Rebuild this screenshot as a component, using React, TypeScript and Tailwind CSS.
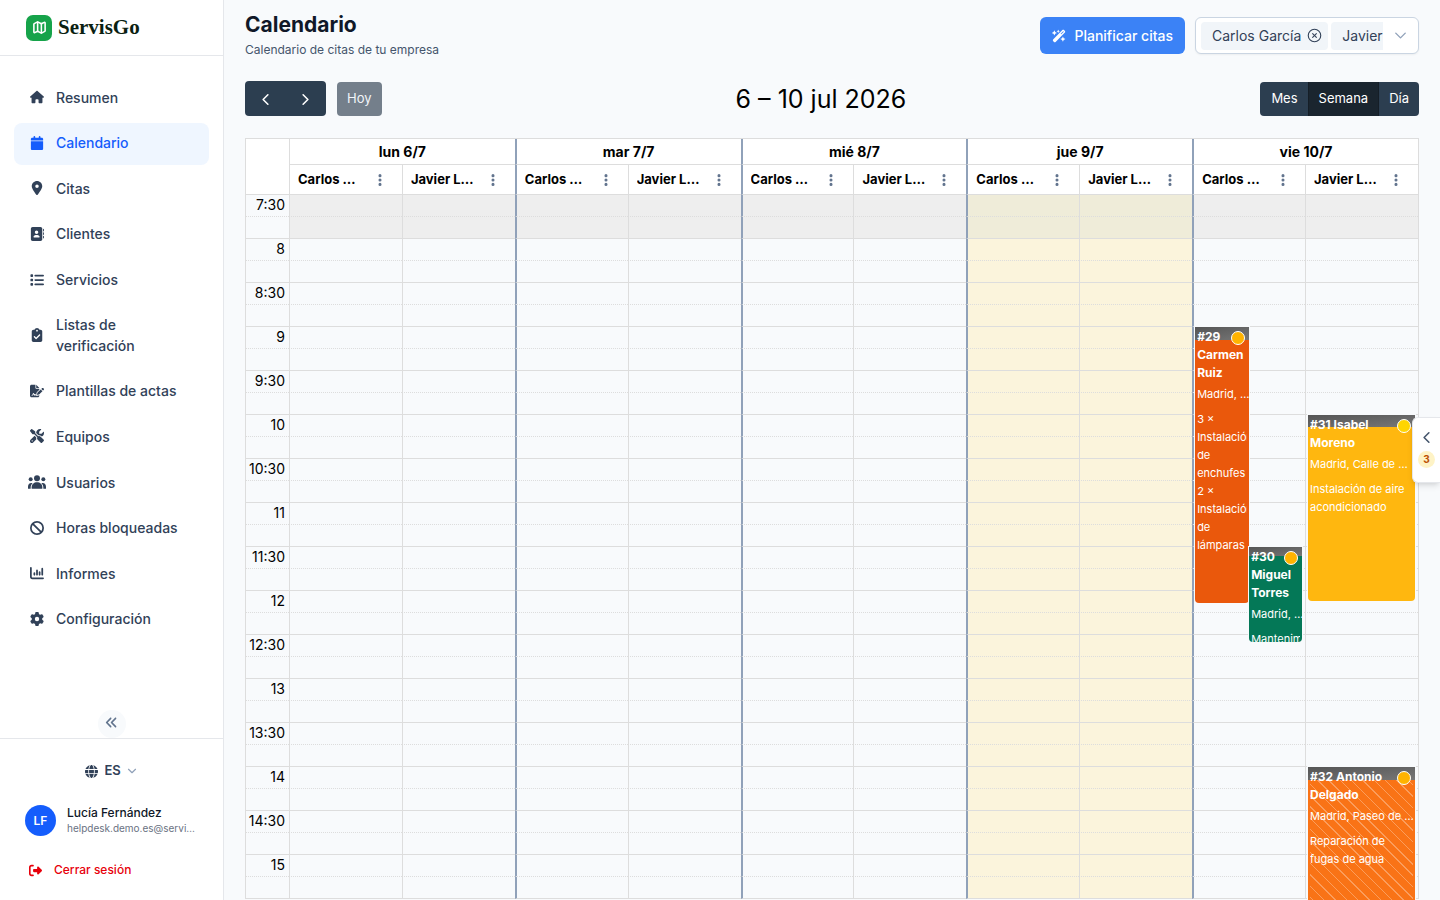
import type { ComponentType } from 'react';
import {
  FaAddressBook,
  FaAnglesLeft,
  FaBan,
  FaCalendar,
  FaChartColumn,
  FaClipboardCheck,
  FaEllipsisVertical,
  FaFileSignature,
  FaGear,
  FaGlobe,
  FaHouse,
  FaList,
  FaLocationDot,
  FaRightFromBracket,
  FaScrewdriverWrench,
  FaWandMagicSparkles,
} from 'react-icons/fa6';
import { ChevronDown, ChevronLeft, ChevronRight, CircleX, Map } from 'lucide-react';

function UsersIcon({ className }: { className?: string }) {
  return (
    <svg viewBox="0 0 54 42" fill="currentColor" className={className} aria-hidden="true">
      <circle cx="27" cy="10" r="9" />
      <circle cx="8" cy="13" r="6" />
      <circle cx="46" cy="13" r="6" />
      <path d="M11 41v-4c0-9 7-15 16-15s16 6 16 15v4z" />
      <path d="M0 41v-6c0-6 4-11 10-11 1 0 3 0 4 1-4 3-6 8-6 13v3z" />
      <path d="M54 41v-6c0-6-4-11-10-11-1 0-3 0-4 1 4 3 6 8 6 13v3z" />
    </svg>
  );
}

const navItems: { label: string; icon: ComponentType<{ className?: string }>; active?: boolean }[] = [
  { label: 'Resumen', icon: FaHouse },
  { label: 'Calendario', icon: FaCalendar, active: true },
  { label: 'Citas', icon: FaLocationDot },
  { label: 'Clientes', icon: FaAddressBook },
  { label: 'Servicios', icon: FaList },
  { label: 'Listas de verificación', icon: FaClipboardCheck },
  { label: 'Plantillas de actas', icon: FaFileSignature },
  { label: 'Equipos', icon: FaScrewdriverWrench },
  { label: 'Usuarios', icon: UsersIcon },
  { label: 'Horas bloqueadas', icon: FaBan },
  { label: 'Informes', icon: FaChartColumn },
  { label: 'Configuración', icon: FaGear },
];

const days = ['lun 6/7', 'mar 7/7', 'mié 8/7', 'jue 9/7', 'vie 10/7'];
const technicians = ['Carlos García', 'Javier López'];
const TODAY = 3;

// one row every 15 minutes, starting at 7:30
const SLOT_HEIGHT = 22;
const rows = Array.from({ length: 32 }, (_, i) => {
  const minutes = 450 + i * 15;
  const h = Math.floor(minutes / 60);
  const m = minutes % 60;
  return { index: i, label: m === 0 ? `${h}` : m === 30 ? `${h}:30` : '' };
});

type Appointment = {
  id: string;
  client: string;
  address: string;
  services: string[];
  day: number;
  tech: number;
  row: number;
  height: number;
  place: string;
  color: string;
  bar: string;
  dot: string;
  striped?: boolean;
};

const appointments: Appointment[] = [
  {
    id: '#29',
    client: 'Carmen Ruiz',
    address: 'Madrid, …',
    services: ['3 × Instalación de enchufes', '2 × Instalación de lámparas'],
    day: 4,
    tech: 0,
    row: 6,
    height: 276,
    place: 'left-px w-[54px]',
    color: 'bg-[#ea580c]',
    bar: 'h-[13px]',
    dot: 'bg-[#ffb300]',
  },
  {
    id: '#30',
    client: 'Miguel Torres',
    address: 'Madrid, …',
    services: ['Mantenimiento de caldera'],
    day: 4,
    tech: 0,
    row: 16,
    height: 95,
    place: 'left-[55px] w-[53px]',
    color: 'bg-[#047857]',
    bar: 'h-[9px]',
    dot: 'bg-[#ffb300]',
  },
  {
    id: '#31',
    client: 'Isabel Moreno',
    address: 'Madrid, Calle de …',
    services: ['Instalación de aire acondicionado'],
    day: 4,
    tech: 1,
    row: 10,
    height: 186,
    place: 'left-[2px] right-[3px]',
    color: 'bg-[#ffb70f]',
    bar: 'h-[12px]',
    dot: 'bg-[#ffd500]',
  },
  {
    id: '#32',
    client: 'Antonio Delgado',
    address: 'Madrid, Paseo de …',
    services: ['Reparación de fugas de agua'],
    day: 4,
    tech: 1,
    row: 26,
    height: 186,
    place: 'left-[2px] right-[3px]',
    color: 'bg-[#f97316]',
    bar: 'h-[13px]',
    dot: 'bg-[#ffb300]',
    striped: true,
  },
];

function Sidebar() {
  return (
    <aside className="flex w-56 shrink-0 flex-col border-r border-gray-200 bg-white">
      <a href="#inicio" className="flex h-14 shrink-0 items-center gap-1.5 border-b border-gray-200 pl-[26px]">
        <span className="flex size-[26px] items-center justify-center rounded-[7px] bg-[#16a34a] text-white">
          <Map size={15} strokeWidth={2.5} />
        </span>
        <span className="font-['Liberation_Serif',serif] text-[21px] font-bold text-[#0b1f12]">ServisGo</span>
      </a>
      <nav className="flex-1 px-3.5 pt-[21px]">
        <ul className="flex min-h-[564px] flex-col justify-between">
          {navItems.map(({ label, icon: Icon, active }) => (
            <li key={label}>
              <a
                href="#"
                className={`flex min-h-[42px] items-center gap-2.5 rounded-lg pt-[9px] pr-6 pb-[11px] pl-3.5 text-sm leading-[21px] font-medium ${
                  active ? 'bg-blue-50 text-[#155dfc]' : 'text-slate-700'
                }`}
              >
                <span className="flex w-[18px] shrink-0 justify-center">
                  <Icon className="h-3.5 w-auto" />
                </span>
                {label}
              </a>
            </li>
          ))}
        </ul>
      </nav>
      <div className="flex justify-center">
        <button
          type="button"
          aria-label="Contraer menú"
          className="flex size-7 items-center justify-center rounded-full bg-slate-50 pb-1 text-slate-500"
        >
          <FaAnglesLeft size={13} />
        </button>
      </div>
      <div className="flex flex-col border-t border-gray-200 px-[25px] pt-[18px] pb-5">
        <div className="flex h-7 items-center justify-center gap-[7px] text-slate-700">
          <FaGlobe size={13} />
          <div className="relative flex items-center">
            <select aria-label="Idioma" className="w-[34px] appearance-none text-[13px] font-semibold">
              <option>ES</option>
            </select>
            <ChevronDown size={14} className="pointer-events-none absolute right-0 text-slate-400" />
          </div>
        </div>
        <div className="mt-[20px] flex items-center gap-[11px]">
          <span className="flex size-[31px] shrink-0 items-center justify-center rounded-full bg-[#155dfc] text-xs font-semibold text-white">
            LF
          </span>
          <div className="min-w-0 flex-1">
            <p className="truncate text-xs leading-4 font-medium text-gray-900">Lucía Fernández</p>
            <p className="truncate text-[10px] leading-[15px] text-gray-500">helpdesk.demo.es@servisgo.example</p>
          </div>
        </div>
        <button type="button" className="mt-[24px] ml-1 flex items-center gap-3 text-xs leading-5 font-medium text-[#e7000b]">
          <FaRightFromBracket size={13} />
          Cerrar sesión
        </button>
      </div>
    </aside>
  );
}

function PageHeader() {
  return (
    <header className="flex items-start justify-between">
      <div>
        <h1 className="text-[21px] leading-[26px] font-bold text-gray-900">Calendario</h1>
        <p className="mt-[3px] text-xs leading-[18px] text-slate-600">Calendario de citas de tu empresa</p>
      </div>
      <div className="mt-[5px] flex gap-2.5">
        <button
          type="button"
          className="flex h-[37px] items-center gap-2 rounded-md bg-[#3b82f6] px-3 text-sm font-medium text-white"
        >
          <FaWandMagicSparkles className="h-3.5 w-auto" />
          Planificar citas
        </button>
        <div className="flex h-[37px] w-[224px] items-center rounded-md border border-slate-300 bg-white pl-[5px] shadow-xs">
          <div className="flex flex-1 gap-[3px] overflow-hidden text-sm text-slate-700">
            <span className="flex h-7 shrink-0 items-center gap-1.5 rounded-sm bg-slate-100 pr-1.5 pl-[11px]">
              Carlos García
              <button type="button" aria-label="Quitar Carlos García">
                <CircleX size={15} strokeWidth={1.75} />
              </button>
            </span>
            <span className="flex h-7 shrink-0 items-center rounded-sm bg-slate-100 px-[11px] whitespace-nowrap">
              Javier López
            </span>
          </div>
          <button type="button" aria-label="Elegir técnicos" className="flex w-[35px] justify-center text-slate-400">
            <ChevronDown size={19} strokeWidth={1.75} />
          </button>
        </div>
      </div>
    </header>
  );
}

function Toolbar() {
  return (
    <div className="mt-[22px] flex items-center justify-between">
      <div className="flex items-end gap-[11px]">
        <div className="flex h-[35px] rounded-sm bg-[#2c3e50] text-white">
          <button type="button" aria-label="Semana anterior" className="flex w-10 items-center justify-center pt-0.5">
            <ChevronLeft size={19} />
          </button>
          <button type="button" aria-label="Semana siguiente" className="flex w-[41px] items-center justify-center pt-0.5">
            <ChevronRight size={19} />
          </button>
        </div>
        <button type="button" disabled className="h-[34px] rounded-sm bg-[#747f8b] px-2.5 text-[13px] text-slate-100">
          Hoy
        </button>
      </div>
      <h2 className="text-[25px] leading-8 text-black">6 – 10 jul 2026</h2>
      <div className="flex h-[34px] text-[13px] text-white">
        <button type="button" className="rounded-l-sm bg-[#2c3e50] pr-2.5 pl-[11px]">
          Mes
        </button>
        <button type="button" aria-pressed="true" className="border-x border-[#151e27] bg-[#1a252f] px-2.5">
          Semana
        </button>
        <button type="button" className="rounded-r-sm bg-[#2c3e50] px-2.5">
          Día
        </button>
      </div>
    </div>
  );
}

function AppointmentCard({ item }: { item: Appointment }) {
  return (
    <article
      className={`absolute top-0 z-10 overflow-hidden rounded-b-sm leading-[18px] text-white shadow-[0_0_0_1px_#f8fafc] ${item.place} ${item.color}`}
      style={{ height: item.height }}
    >
      <div className={`bg-linear-to-br from-[#555555] to-[#777777] ${item.bar}`} />
      {item.striped && (
        <div className="absolute inset-x-[2px] top-[13px] bottom-0 bg-[repeating-linear-gradient(45deg,transparent_0_7px,rgba(255,255,255,0.3)_7px_8px)]" />
      )}
      <span className={`absolute top-1 right-1 size-3.5 rounded-full border border-white ${item.dot}`} />
      <div className="absolute top-px right-0 bottom-0 left-[2px] overflow-hidden text-[11px]">
        <p className="pr-[18px] text-xs leading-[18px] font-bold">
          {item.id} {item.client}
        </p>
        <p className="mt-[3px] whitespace-nowrap">{item.address}</p>
        <div className="mt-[7px] mr-[2px] overflow-hidden">
          {item.services.map((service) => (
            <p key={service}>{service}</p>
          ))}
        </div>
      </div>
    </article>
  );
}

function WeekTable() {
  return (
    <table className="mt-[22px] w-full table-fixed border-separate border-spacing-0 border-t border-r border-l border-[#dddddd] text-sm text-black">
      <colgroup>
        <col className="w-[43px]" />
        {days.flatMap((day) => technicians.map((tech) => <col key={day + tech} />))}
      </colgroup>
      <thead className="bg-white">
        <tr className="h-[26px]">
          <td rowSpan={2} className="border-b border-[#dddddd]" />
          {days.map((day, d) => (
            <th
              key={day}
              colSpan={2}
              scope="colgroup"
              className={`border-b border-b-[#dddddd] p-0 font-bold ${
                d === 0 ? 'border-l border-l-[#dddddd]' : 'border-l-2 border-l-slate-400'
              }`}
            >
              {day}
            </th>
          ))}
        </tr>
        <tr className="h-[30px]">
          {days.flatMap((day, d) =>
            technicians.map((tech, t) => (
              <th
                key={day + tech}
                scope="col"
                className={`border-b border-b-[#dddddd] p-0 text-[13px] font-bold ${
                  d > 0 && t === 0 ? 'border-l-2 border-l-slate-400' : 'border-l border-l-[#dddddd]'
                }`}
              >
                <div className="flex items-center gap-2 pr-3 pl-2">
                  <span className="flex-1 truncate text-left">{tech}</span>
                  <button type="button" aria-label={`Opciones de ${tech}`} className="flex w-5 shrink-0 justify-center text-slate-500">
                    <FaEllipsisVertical size={14} />
                  </button>
                </div>
              </th>
            )),
          )}
        </tr>
      </thead>
      <tbody>
        {rows.map((row) => {
          const line = row.index % 2 === 0 ? 'border-b border-b-[#dddddd] border-dotted' : 'border-b border-b-[#dddddd]';
          return (
            <tr key={row.index} style={{ height: SLOT_HEIGHT }}>
              <th scope="row" className={`p-0 pr-1 text-right align-top leading-5 font-normal ${line}`}>
                {row.label}
              </th>
              {days.flatMap((day, d) =>
                technicians.map((tech, t) => {
                  const closed = row.index < 2;
                  const fill =
                    d === TODAY ? (closed ? 'bg-[#efecd9]' : 'bg-[#fbf4dc]') : closed ? 'bg-[#eeeeee]' : '';
                  return (
                    <td
                      key={day + tech}
                      className={`relative p-0 ${line} ${fill} [border-left-style:solid] ${
                        d > 0 && t === 0 ? 'border-l-2 border-l-slate-400' : 'border-l border-l-[#dddddd]'
                      }`}
                    >
                      {appointments
                        .filter((a) => a.day === d && a.tech === t && a.row === row.index)
                        .map((a) => (
                          <AppointmentCard key={a.id} item={a} />
                        ))}
                    </td>
                  );
                }),
              )}
            </tr>
          );
        })}
      </tbody>
    </table>
  );
}

export default function App() {
  return (
    <div className="relative flex h-screen overflow-hidden bg-slate-50 font-['Inter',sans-serif]">
      <Sidebar />
      <main className="min-w-0 flex-1 overflow-hidden px-[21px] pt-3">
        <PageHeader />
        <Toolbar />
        <WeekTable />
      </main>
      <button
        type="button"
        aria-label="Citas pendientes: 3"
        className="absolute top-[417px] right-0 z-20 flex h-[66px] w-7 flex-col items-center justify-center gap-1 rounded-l-md border border-r-0 border-gray-200 bg-white pb-1 shadow-md"
      >
        <ChevronLeft size={19} className="text-slate-600" />
        <span className="flex size-[17px] items-center justify-center rounded-full bg-amber-100 text-[10px] font-bold text-amber-700">
          3
        </span>
      </button>
    </div>
  );
}
